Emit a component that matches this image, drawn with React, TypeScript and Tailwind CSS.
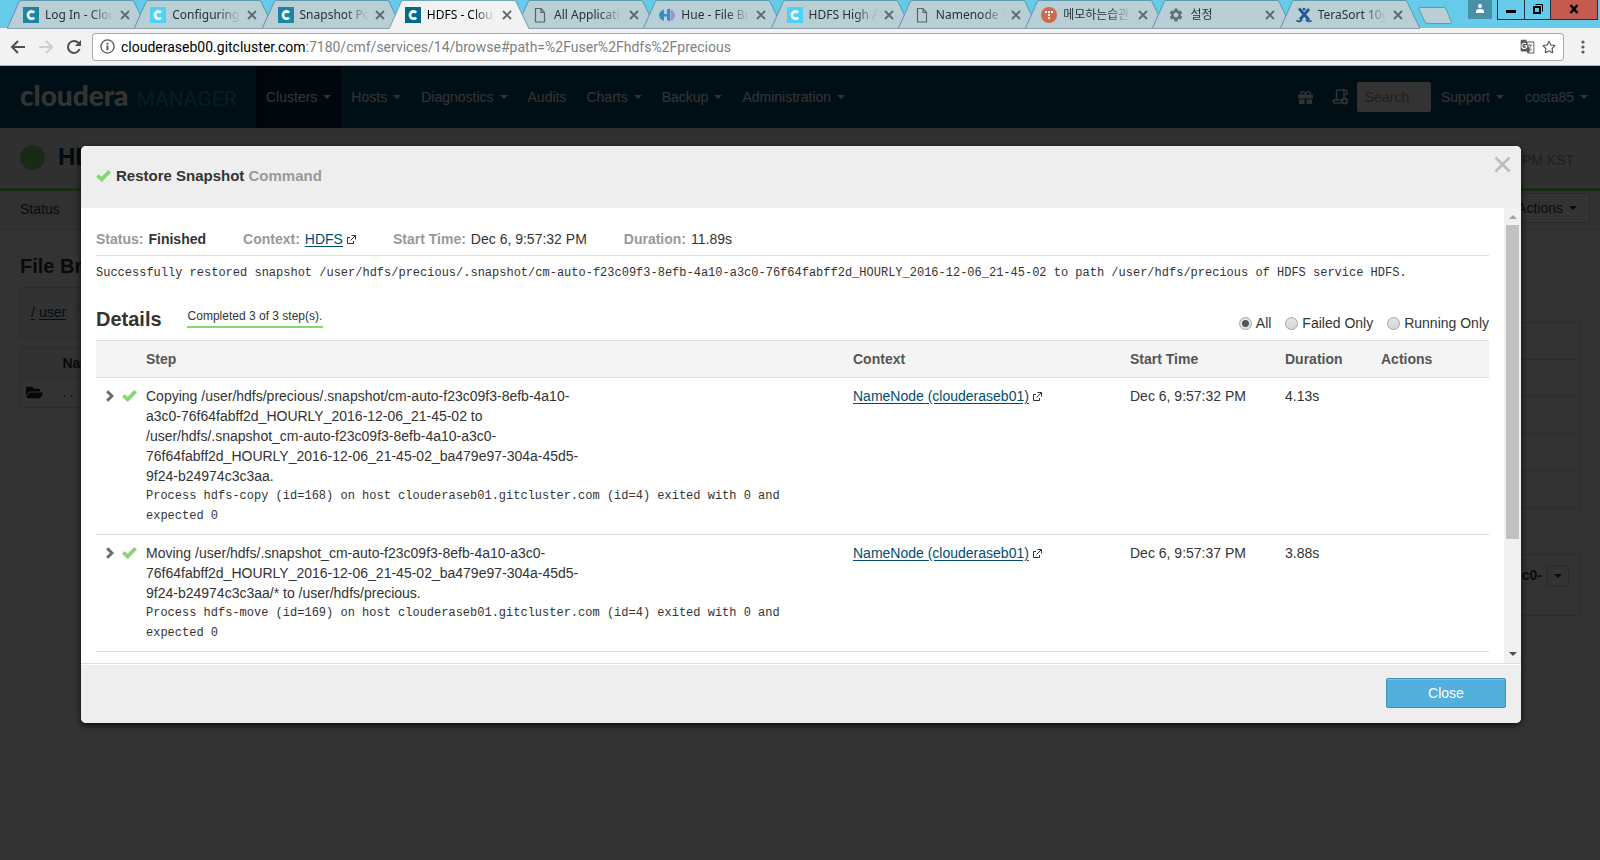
import React from "react";
import { FaGift, FaRegStar, FaFolderOpen } from "react-icons/fa";
import { MdSettings, MdGTranslate } from "react-icons/md";

const UI = "font-['Noto_Sans','Noto_Sans_CJK_KR',sans-serif]";

function Favicon({ kind }: { kind: string }) {
  switch (kind) {
    case "dark":
    case "light":
    case "active": {
      const fill = kind === "light" ? "#4dd2f7" : kind === "active" ? "#026a8c" : "#1a86a3";
      return (
        <svg viewBox="0 0 16 16" className="size-4">
          <rect width="16" height="16" fill={fill} />
          <path d="M11.200 5.600A3.600 3.600 0 1 0 11.200 10.600" fill="none" stroke="#f3fafc" strokeWidth="2.800" />
        </svg>
      );
    }
    case "doc":
      return (
        <svg viewBox="0 0 16 16" className="size-4" fill="none" stroke="#5b6468" strokeWidth="1.2">
          <path d="M3.5 1.5h5.5l3.5 4v9.500h-9z M9 1.500v4h3.500" />
        </svg>
      );
    case "hue":
      return (
        <svg viewBox="0 0 16 16" className="size-4">
          <path d="M5 2.500C1.500 3.500 0 6 0 8.300s1.500 4.700 5 5.700z" fill="#3a8fcb" />
          <path d="M11.500 2.500c3 1 4.500 3.500 4.500 5.800s-1.500 4.700-4.500 5.700z" fill="#9a95cf" />
          <path d="M4 7h4V2.500l3-1v13L8 13V9.500H4z" fill="#3a8fcb" />
        </svg>
      );
    case "tistory":
      return (
        <svg viewBox="0 0 16 16" className="size-4">
          <circle cx="8" cy="8" r="8" fill="#d2694a" />
          <g fill="#fff">
            <rect x="4" y="4" width="2" height="2" />
            <rect x="7" y="4" width="2" height="2" />
            <rect x="10" y="4" width="2" height="2" />
            <rect x="7" y="7" width="2" height="2" />
            <rect x="7" y="10" width="2" height="2" />
          </g>
        </svg>
      );
    case "gear":
      return <MdSettings className="size-4 text-[#5f7077]" />;
    default:
      return (
        <svg viewBox="0 0 16 16" className="size-4" fill="none" stroke="#1f5a94">
          <path d="M3 1.500 13 13M13 2 4 12.500" strokeWidth="2.800" />
          <circle cx="8" cy="2.200" r="1.400" fill="#1f5a94" stroke="none" />
          <path d="M.500 13.500c2 1.500 4.500 1 5.500-1M15.500 13.500c-2 1.500-4.500 1-5.500-1" strokeWidth="1.800" />
        </svg>
      );
  }
}

const tabs = [
  { icon: "dark", title: "Log In - Clou" },
  { icon: "light", title: "Configuring" },
  { icon: "dark", title: "Snapshot Po" },
  { icon: "active", title: "HDFS - Clou" },
  { icon: "doc", title: "All Applicati" },
  { icon: "hue", title: "Hue - File Br" },
  { icon: "light", title: "HDFS High A" },
  { icon: "doc", title: "Namenode i" },
  { icon: "tistory", title: "메모하는습관" },
  { icon: "gear", title: "설정" },
  { icon: "tera", title: "TeraSort 10g" },
];

function BrowserTab({ icon, title }: { icon: string; title: string }) {
  const active = icon === "active";
  return (
    <div className={`relative h-full min-w-0 flex-1 ${active ? "z-10" : ""}`}>
      <svg
        viewBox="0 0 140 29"
        preserveAspectRatio="none"
        className="absolute top-0 -right-[13px] left-0 h-[29px] w-[calc(100%+13px)]"
      >
        <path
          d="M0 29 L12 2 Q12.500 .500 14 .500 H125 Q126.500 .500 127 2 L140 29"
          fill={active ? "#f2f2f2" : "#b9ced5"}
          stroke={active ? "#6fa5b6" : "#5f9cb0"}
        />
        {!active && <path d="M0 28.500H140" stroke="#8ba3ad" />}
      </svg>
      <div className="relative flex h-[28px] items-center pt-[2px] pl-[16px]">
        <Favicon kind={icon} />
        <span
          className={`ml-[6px] w-[70px] overflow-hidden text-[12px] leading-5 whitespace-nowrap ${
            active ? "text-black" : "text-[#26343a]"
          } [mask-image:linear-gradient(to_right,black_65%,transparent_98%)]`}
        >
          {title}
        </span>
        <button aria-label="Close tab" className="ml-[5px] text-[#5c6b71]">
          <svg viewBox="0 0 10 10" className="size-[10px]" stroke="currentColor" strokeWidth="1.800">
            <path d="M1 1l8 8M9 1l-8 8" />
          </svg>
        </button>
      </div>
    </div>
  );
}

function TabStrip() {
  return (
    <div className="flex h-[28px] justify-between bg-[#66caea]">
      <div className="flex min-w-0 flex-1 pl-[7px]">
        <div className="flex max-w-[1400px] min-w-0 flex-1">
          {tabs.map((t, i) => (
            <BrowserTab key={i} {...t} />
          ))}
        </div>
        <button aria-label="New tab" className="mt-[7px] ml-[11px] h-[18px]">
          <svg viewBox="0 0 35 18" className="h-[18px] w-[35px]">
            <path
              d="M2 .500H26q1.500 0 2 1.500L33.500 15q.500 1.500-1 1.500H9q-1.500 0-2-1.500L1 2Q.500 .500 2 .500z"
              fill="#b9ced5"
              stroke="#5f9cb0"
            />
          </svg>
        </button>
      </div>
      <div className="flex items-start pr-[2px]">
        <button aria-label="Profile" className="mr-[5px] flex h-[19px] w-[24px] justify-center bg-[#4a90a6] pt-[4px]">
          <svg viewBox="0 0 10 9" className="h-[9px] w-[10px]" fill="#fff">
            <circle cx="5" cy="2" r="2" />
            <path d="M1 9V7q0-2 4-2t4 2v2z" />
          </svg>
        </button>
        <div className="flex h-[20px] border border-t-0 border-[#23303a]">
          <button aria-label="Minimize" className="flex w-[27px] justify-center border-r border-[#23303a] pt-[10px]">
            <span className="h-[3px] w-[10px] bg-black" />
          </button>
          <button aria-label="Restore" className="flex w-[26px] justify-center border-r border-[#23303a] pt-[4px]">
            <svg viewBox="0 0 10 10" className="size-[10px]" fill="none" stroke="#000">
              <path d="M1 3h6v6H1z" strokeWidth="2" />
              <path d="M2.500 .500h7v7" />
            </svg>
          </button>
          <button aria-label="Close window" className="flex w-[46px] justify-center bg-[#c35b50] pt-[4px]">
            <svg viewBox="0 0 10 10" className="size-[10px]" stroke="#000" strokeWidth="2.400">
              <path d="M1.500 1l7 8M8.500 1l-7 8" />
            </svg>
          </button>
        </div>
      </div>
    </div>
  );
}

function Toolbar() {
  return (
    <div className="flex h-[38px] items-center border-b border-[#b5b5b5] bg-[#f2f2f2] pr-[15px] pl-[10px]">
      <button aria-label="Back" className="text-[#4f4f4f]">
        <svg viewBox="0 0 16 16" className="size-4" fill="none" stroke="currentColor" strokeWidth="2">
          <path d="M15 8H2.500M8 2 2 8l6 6" />
        </svg>
      </button>
      <button aria-label="Forward" className="ml-[12px] text-[#cfcfcf]">
        <svg viewBox="0 0 16 16" className="size-4" fill="none" stroke="currentColor" strokeWidth="2">
          <path d="M1 8h12.500M8 2l6 6-6 6" />
        </svg>
      </button>
      <button aria-label="Reload" className="ml-[12px] text-[#4f4f4f]">
        <svg viewBox="0 0 16 16" className="size-4" fill="none" stroke="currentColor" strokeWidth="2">
          <path d="M13.600 10A6 6 0 1 1 12.500 4" />
          <path d="M15 1v6H9z" fill="currentColor" stroke="none" />
        </svg>
      </button>
      <div className="ml-[10px] flex h-[28px] flex-1 items-center rounded-[3px] border border-[#a9a9a9] bg-white pr-[7px] pl-[7px]">
        <svg viewBox="0 0 16 16" className="size-[15px] shrink-0" fill="none" stroke="#555">
          <circle cx="8" cy="8" r="7" strokeWidth="1.400" />
          <path d="M8 7v5M8 4v1.800" strokeWidth="2" />
        </svg>
        <div className="ml-[6px] flex-1 font-['Roboto',sans-serif] text-[14px] leading-5 text-[#808080]">
          <span className="text-black">clouderaseb00.gitcluster.com</span>
          :7180/cmf/services/14/browse#path=%2Fuser%2Fhdfs%2Fprecious
        </div>
        <button aria-label="Translate">
          <MdGTranslate className="size-[15px] text-[#5a5a5a]" />
        </button>
        <button aria-label="Bookmark" className="ml-[7px]">
          <FaRegStar className="size-[14px] text-[#5a5a5a]" />
        </button>
      </div>
      <button aria-label="Menu" className="ml-[17px]">
        <svg viewBox="0 0 4 14" className="h-[14px] w-[4px]" fill="#5a5a5a">
          <circle cx="2" cy="2" r="1.600" />
          <circle cx="2" cy="7" r="1.600" />
          <circle cx="2" cy="12" r="1.600" />
        </svg>
      </button>
    </div>
  );
}

function Caret() {
  return (
    <span className="ml-[6px] inline-block border-x-4 border-t-4 border-x-transparent border-t-current align-middle" />
  );
}

const menus = ["Clusters", "Hosts", "Diagnostics", "Audits", "Charts", "Backup", "Administration"];

function NavBar() {
  return (
    <nav className="flex h-[62px] items-center bg-[#004868] text-[14px] text-white">
      <a href="#home" className="ml-[20px] flex w-[236px] items-baseline whitespace-nowrap">
        <span className="font-['Lato',sans-serif] text-[28px] leading-8 font-black">cloudera</span>
        <span className="ml-[8px] font-['Roboto',sans-serif] text-[21px] leading-8 text-[#1893c0]">MANAGER</span>
      </a>
      {menus.map((m, i) => (
        <a
          key={m}
          href={"#" + m.toLowerCase()}
          className={`flex h-full items-center px-[10px] ${i === 0 ? "bg-[#022440] shadow-[inset_0_3px_8px_rgba(0,0,0,0.125)]" : ""}`}
        >
          {m}
          {m !== "Audits" && <Caret />}
        </a>
      ))}
      <div className="flex-1" />
      <FaGift className="size-[15px]" />
      <svg viewBox="0 0 16 16" className="ml-[19px] size-4" fill="none" stroke="currentColor" strokeWidth="1.500">
        <path d="M4.500 11V3q0-2 2-2H13q2 0 2 2v2.500h-3M12 1.500V8M4.500 11H1.500q-.500 3 2 3H9M4.500 11H9" />
        <circle cx="12.500" cy="12" r="2.500" strokeWidth="2" />
      </svg>
      <input
        aria-label="Search"
        placeholder="Search"
        className="ml-[9px] h-[30px] w-[74px] rounded-[2px] bg-white px-[8px] text-[14px] placeholder:text-[#999]"
      />
      <a href="#support" className="ml-[10px] flex items-center">
        Support
        <Caret />
      </a>
      <a href="#user" className="mr-[12px] ml-[21px] flex items-center">
        costa85
        <Caret />
      </a>
    </nav>
  );
}

function ServicePage() {
  return (
    <div className="text-[14px] text-[#333]">
      <div className="flex h-[63px] items-start justify-between border-b-[3px] border-[#82d070] bg-[#eee] px-[20px] pr-[26px]">
        <div className="mt-[13px] flex items-center">
          <span className="size-[25px] rounded-full bg-[#82d070]" />
          <h1 className="ml-[13px] text-[24px] leading-8 font-bold text-[#003a5c]">HDFS</h1>
        </div>
        <span className="mt-[22px] leading-5 text-[#999]">PM KST</span>
      </div>
      <div className="flex h-[39px] items-start justify-between border-b border-[#ddd] bg-[#f4f4f4] pr-[10px] pl-[20px]">
        <a href="#status" className="mt-[8px] leading-5 text-[#004868]">
          Status
        </a>
        <button className="mt-[2px] flex h-[30px] items-center rounded-[2px] border border-[#ccc] bg-white px-[12px]">
          Actions
          <Caret />
        </button>
      </div>
      <div className="flex items-start gap-[20px] px-[20px]">
        <section className="flex-[3]">
          <h2 className="mt-[22px] text-[20px] leading-7 font-bold">File Browser</h2>
          <div className="mt-[7px] flex h-[51px] items-center border border-[#ddd] bg-[#f7f7f7] px-[10px]">
            <a href="#root" className="text-[#004868] underline underline-offset-2">/</a>
            <a href="#user" className="ml-[4px] text-[#004868] underline underline-offset-2">user</a>
            <span className="ml-[9px] text-[#ccc]">/</span>
          </div>
          <table className="mt-[10px] w-full border border-[#ddd]">
            <thead className="border-b border-[#ddd] bg-[#f7f7f7]">
              <tr className="h-[29px]">
                <th className="w-[42px]" />
                <th className="text-left">Name</th>
              </tr>
            </thead>
            <tbody>
              <tr className="h-[30px]">
                <td className="pl-[5px]">
                  <FaFolderOpen className="size-[17px] text-[#222]" />
                </td>
                <td className="tracking-[3px]">..</td>
              </tr>
            </tbody>
          </table>
        </section>
        <section className="mt-[92px] flex-1">
          <div className="divide-y divide-[#ddd] border border-[#ddd]">
            <div className="h-[37px]" />
            <div className="h-[37px]" />
            <div className="h-[37px]" />
            <div className="h-[37px]" />
            <div className="h-[37px]" />
          </div>
          <div className="mt-[45px] flex h-[62px] items-start justify-end gap-[5px] border border-[#ddd] pt-[10px] pr-[10px] font-bold">
            c0-
            <button aria-label="Snapshot menu" className="flex size-[22px] items-center justify-center rounded-[2px] border border-[#ccc]">
              <span className="border-x-4 border-t-4 border-x-transparent border-t-current" />
            </button>
          </div>
        </section>
      </div>
    </div>
  );
}

function Check() {
  return (
    <svg viewBox="0 0 15 12" className="h-[12px] w-[15px]" fill="#86d674">
      <path d="M0 6.800 2.600 4.200 5.600 6.800 12.200 0 15 2.500 5.800 12z" />
    </svg>
  );
}

function External() {
  return (
    <svg viewBox="0 0 9 9" className="ml-[4px] size-[9px]" fill="none" stroke="#333">
      <path d="M3 2.500H.500v6h6V6M4.500 .500h4v4M8.500 .500 3.500 5.500" />
    </svg>
  );
}

function ContextLink({ children }: { children: React.ReactNode }) {
  return (
    <span className="inline-flex items-center">
      <a href="#context" className="text-[#004d70] underline underline-offset-2">
        {children}
      </a>
      <External />
    </span>
  );
}

function Fact({ label, children }: { label: string; children: React.ReactNode }) {
  return (
    <div className="flex gap-[5px]">
      <span className="font-bold text-[#999]">{label}:</span>
      {children}
    </div>
  );
}

const steps = [
  {
    text: "Copying /user/hdfs/precious/.snapshot/cm-auto-f23c09f3-8efb-4a10-a3c0-76f64fabff2d_HOURLY_2016-12-06_21-45-02 to /user/hdfs/.snapshot_cm-auto-f23c09f3-8efb-4a10-a3c0-76f64fabff2d_HOURLY_2016-12-06_21-45-02_ba479e97-304a-45d5-9f24-b24974c3c3aa.",
    log: "Process hdfs-copy (id=168) on host clouderaseb01.gitcluster.com (id=4) exited with 0 and expected 0",
    start: "Dec 6, 9:57:32 PM",
    duration: "4.13s",
  },
  {
    text: "Moving /user/hdfs/.snapshot_cm-auto-f23c09f3-8efb-4a10-a3c0-76f64fabff2d_HOURLY_2016-12-06_21-45-02_ba479e97-304a-45d5-9f24-b24974c3c3aa/* to /user/hdfs/precious.",
    log: "Process hdfs-move (id=169) on host clouderaseb01.gitcluster.com (id=4) exited with 0 and expected 0",
    start: "Dec 6, 9:57:37 PM",
    duration: "3.88s",
  },
];

const MONO = "font-['Liberation_Mono',monospace] text-[12px] leading-5";

function StepTable() {
  return (
    <table className="w-full table-fixed border-collapse text-left">
      <colgroup>
        <col className="w-[50px]" />
        <col />
        <col className="w-[277px]" />
        <col className="w-[155px]" />
        <col className="w-[96px]" />
        <col className="w-[108px]" />
      </colgroup>
      <thead>
        <tr className="h-[37px] border-y border-[#ddd] bg-[#f4f4f4] text-[#555]">
          <th />
          <th>Step</th>
          <th>Context</th>
          <th>Start Time</th>
          <th>Duration</th>
          <th>Actions</th>
        </tr>
      </thead>
      <tbody>
        {steps.map((s) => (
          <tr key={s.log} className="border-b border-[#ddd] align-top [&>td]:py-[8px]">
            <td>
              <div className="flex h-5 items-center gap-[8px] pl-[10px]">
                <button aria-label="Expand step">
                  <svg viewBox="0 0 8 12" className="h-[12px] w-[8px]" fill="none" stroke="#6b6b6b" strokeWidth="3">
                    <path d="M1.200 1.200 6 6l-4.800 4.800" />
                  </svg>
                </button>
                <Check />
              </div>
            </td>
            <td>
              <div className="max-w-[450px]">{s.text}</div>
              <div className={`max-w-[660px] ${MONO}`}>{s.log}</div>
            </td>
            <td>
              <ContextLink>NameNode (clouderaseb01)</ContextLink>
            </td>
            <td>{s.start}</td>
            <td>{s.duration}</td>
            <td />
          </tr>
        ))}
      </tbody>
    </table>
  );
}

function RadioOption({ label, checked }: { label: string; checked?: boolean }) {
  return (
    <label className="flex items-center gap-[4px]">
      <input
        type="radio"
        name="filter"
        defaultChecked={checked}
        className="size-[13px] appearance-none rounded-full border border-[#a5a5a5] bg-linear-to-b from-[#e4e4e4] to-[#d6d6d6] checked:bg-[radial-gradient(circle,#555_0_3px,#e2e2e2_4px)]"
      />
      {label}
    </label>
  );
}

function Dialog() {
  return (
    <div
      role="dialog"
      aria-label="Restore Snapshot Command"
      className="w-[90vw] overflow-hidden rounded-[5px] bg-white text-[14px] leading-5 text-[#333] shadow-[0_2px_6px_rgba(0,0,0,0.8)]"
    >
      <header className="flex h-[62px] items-start justify-between bg-[#eee] pr-[10px] pl-[15px]">
        <h2 className="mt-[20px] flex items-center text-[15px] leading-5 font-bold">
          <Check />
          <span className="ml-[5px]">
            Restore Snapshot <span className="text-[#999]">Command</span>
          </span>
        </h2>
        <button aria-label="Close dialog" className="mt-[10px]">
          <svg viewBox="0 0 17 17" className="size-[17px]" stroke="#bdbdbd" strokeWidth="2.600">
            <path d="M1.500 1.500l14 14M15.500 1.500l-14 14" />
          </svg>
        </button>
      </header>
      <div className="flex h-[455px] overflow-hidden">
        <div className="min-w-0 flex-1 px-[15px] pt-[21px]">
          <div className="flex gap-[37px] border-b border-[#ddd] pb-[6px]">
            <Fact label="Status">
              <span className="font-bold">Finished</span>
            </Fact>
            <Fact label="Context">
              <ContextLink>HDFS</ContextLink>
            </Fact>
            <Fact label="Start Time">Dec 6, 9:57:32 PM</Fact>
            <Fact label="Duration">11.89s</Fact>
          </div>
          <p className={`mt-[7px] ${MONO}`}>
            Successfully restored snapshot
            /user/hdfs/precious/.snapshot/cm-auto-f23c09f3-8efb-4a10-a3c0-76f64fabff2d_HOURLY_2016-12-06_21-45-02 to path
            /user/hdfs/precious of HDFS service HDFS.
          </p>
          <div className="mt-[22px] flex h-[35px] items-start">
            <h3 className="text-[20px] leading-7 font-bold">Details</h3>
            <span className="mt-px ml-[25px] border-b-2 border-[#86d674] px-px text-[12px] leading-5">
              Completed 3 of 3 step(s).
            </span>
            <div className="mt-[8px] ml-auto flex gap-[14px]">
              <RadioOption label="All" checked />
              <RadioOption label="Failed Only" />
              <RadioOption label="Running Only" />
            </div>
          </div>
          <StepTable />
        </div>
        <div className="flex w-[17px] flex-col items-center bg-[#f1f1f1] pt-[7px] pb-[7px]">
          <span className="border-x-4 border-b-4 border-x-transparent border-b-[#a3a3a3]" />
          <span className="mt-[6px] h-[314px] w-[13px] bg-[#c1c1c1]" />
          <span className="mt-auto border-x-4 border-t-4 border-x-transparent border-t-[#505050]" />
        </div>
      </div>
      <footer className="flex h-[60px] items-center justify-end border-t border-[#ddd] bg-[#eee] pr-[15px] pb-[2px] shadow-[inset_0_1px_0_#fff]">
        <button className="h-[30px] w-[120px] rounded-[2px] border border-[#3f90b8] bg-[#53afdb] text-[14px] text-white shadow-[inset_0_1px_0_rgba(255,255,255,0.25)]">
          Close
        </button>
      </footer>
    </div>
  );
}

export default function App() {
  return (
    <div className="flex min-h-screen flex-col bg-white font-['Liberation_Sans',Arial,sans-serif]">
      <div className={UI}>
        <TabStrip />
        <Toolbar />
      </div>
      <div className="relative flex-1">
        <NavBar />
        <ServicePage />
        <div className="absolute inset-0 flex items-start justify-center bg-black/80 pt-[80px] pl-[2px]">
          <Dialog />
        </div>
      </div>
    </div>
  );
}
